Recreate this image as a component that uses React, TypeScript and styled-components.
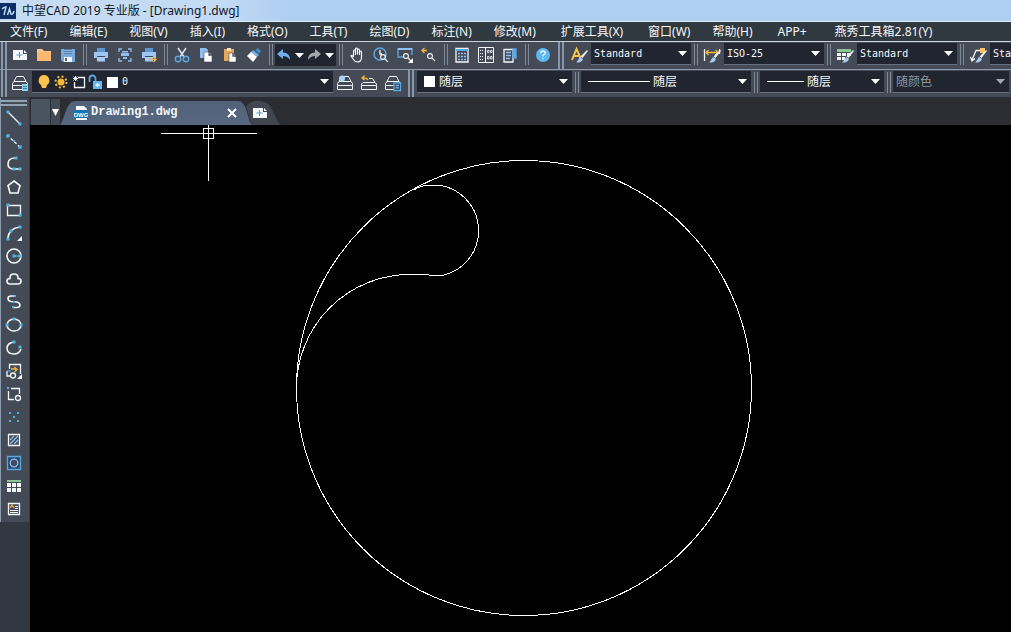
import React from "react";
import styled, { createGlobalStyle } from "styled-components";

const C = {
  bar: "#444b56",
  menu: "#303840",
  field: "#212530",
  rule: "#8d9bae",
  white: "#f4f7fa",
  blue: "#5ba7e0",
  sky: "#8fbdf0",
  cyan: "#4fb4e0",
  gold: "#f3b73e",
};

const UI = `"Noto Sans", "Noto Sans CJK SC", sans-serif`;
const MONO = `"DejaVu Sans Mono", "Noto Sans CJK SC", monospace`;

const Global = createGlobalStyle`
  *, *::before, *::after { box-sizing: border-box; }
  body { margin: 0; background: #000; font-family: ${UI}; font-size: 12px; color: ${C.white}; }
  button { font: inherit; color: inherit; background: none; border: 0; padding: 0; }
  svg { display: block; flex: none; }
`;

const Window = styled.div`
  display: flex;
  flex-direction: column;
  min-height: 100vh;
  overflow: hidden;
`;

const TitleBar = styled.header`
  display: flex;
  align-items: center;
  gap: 6px;
  height: 22px;
  border-bottom: 1px solid #e4eef8;
  background: linear-gradient(90deg, #c6dcf3, #c3daf4 220px, #aecff2 290px);
  color: #10151c;
`;

const Title = styled.h1`
  margin: 0;
  font-size: 12px;
  line-height: 20px;
  font-weight: 400;
  white-space: nowrap;
`;

const MenuBar = styled.nav`
  display: flex;
  gap: 22px;
  height: 20px;
  padding-left: 10px;
  background: ${C.menu};
  border-bottom: 1px solid #cbd3dc;
`;

const MenuItem = styled.button<{ $addon: boolean }>`
  padding: 0 ${(p) => (p.$addon ? 3 : 0)}px;
  line-height: 19px;
  white-space: nowrap;
`;

const Toolbar = styled.div<{ $ruled?: boolean }>`
  display: flex;
  align-items: stretch;
  height: ${(p) => (p.$ruled ? 28 : 27)}px;
  overflow: hidden;
  background: ${C.bar};
  border-bottom: ${(p) => (p.$ruled ? `1px solid ${C.rule}` : "0")};
  > * { flex: none; }
`;

const Grip = styled.span<{ $wide?: boolean }>`
  width: 6px;
  margin: 0 ${(p) => (p.$wide ? 3 : 1)}px;
  border: solid #8796aa;
  border-width: 0 2px;
`;

const Divider = styled.span`
  width: 4px;
  margin: 2px 2px 4px 3px;
  border: solid #7f8998;
  border-width: 0 1px;
`;

const ToolButton = styled.button<{ $narrow?: boolean }>`
  display: flex;
  align-items: center;
  justify-content: center;
  width: ${(p) => (p.$narrow ? 12 : 24)}px;
  padding-bottom: 2px;
`;

const History = styled.div`
  display: flex;
  width: 61px;
  margin: 2px 0 3px;
  background: ${C.field};
  ${ToolButton}:nth-child(odd) { width: 18px; padding: 0; }
  ${ToolButton}:nth-child(even) { padding: 0; }
`;

const Field = styled.div<{ $width: number; $muted?: boolean }>`
  display: flex;
  align-items: center;
  gap: 3px;
  width: ${(p) => p.$width}px;
  height: 22px;
  margin-top: 1px;
  padding: 0 4px 0 3px;
  background: ${C.field};
  border-bottom: 1px solid #68717f;
  color: ${(p) => (p.$muted ? "#8f959e" : C.white)};
`;

const Select = styled.select<{ $mono?: boolean }>`
  appearance: none;
  flex: 1;
  min-width: 0;
  height: 20px;
  padding: 0;
  border: 0;
  outline: 0;
  background: transparent;
  color: inherit;
  font-family: ${(p) => (p.$mono ? MONO : UI)};
  font-size: ${(p) => (p.$mono ? 10 : 12)}px;
  &:disabled { color: inherit; opacity: 1; }
`;

const Swatch = styled.span`
  width: 11px;
  height: 11px;
  margin: 0 1px 0 4px;
  background: #fff;
`;

const LineSample = styled.span<{ $length: number }>`
  width: ${(p) => p.$length}px;
  height: 1px;
  margin-left: 4px;
  background: #fff;
`;

const Workspace = styled.div`
  display: flex;
  flex: 1;
`;

const Side = styled.aside`
  width: 30px;
  background: #323842;
`;

const Palette = styled.div`
  display: flex;
  flex-direction: column;
  align-items: center;
  padding: 2px 3px 2px 0;
  border-left: 1px solid ${C.rule};
  border-right: 1px solid #323842;
  background: ${C.bar};
  margin-top: 1px;
`;

const PaletteGrip = styled.span`
  width: 26px;
  height: 6px;
  border: solid #93a2b3;
  border-width: 2px 0;
`;

const PaletteButton = styled.button`
  display: flex;
  align-items: center;
  justify-content: center;
  width: 24px;
  height: 23px;
`;

const Document = styled.main`
  display: flex;
  flex: 1;
  flex-direction: column;
  min-width: 0;
`;

const TabBar = styled.div`
  display: flex;
  align-items: flex-end;
  height: 28px;
  background: #2b2d33;
`;

const TabBlank = styled.span`
  width: 19px;
  height: 26px;
  margin-left: 1px;
  background: #48545f;
`;

const TabMenu = styled.button`
  display: flex;
  align-items: center;
  justify-content: center;
  width: 9px;
  height: 26px;
  margin-left: 1px;
  background: #424a54;
`;

const Tab = styled.div`
  display: flex;
  align-items: center;
  width: 192px;
  height: 24px;
  padding: 0 15px 0 14px;
  gap: 3px;
  background: linear-gradient(#51617a, #566880);
  clip-path: path("M0 24 C5 18 6 0 15 0 H178 C187 0 187 18 192 24 Z");
`;

const TabName = styled.span`
  flex: 1;
  padding-bottom: 2px;
  font: bold 12px/16px "Liberation Mono", monospace;
`;

const NewTab = styled.button`
  display: flex;
  align-items: center;
  width: 34px;
  height: 24px;
  margin-left: -6px;
  padding: 0 0 0 5px;
  background: #42464f;
  clip-path: path("M6 24 L0 6 C4 0 8 0 12 0 C24 0 24 6 34 24 Z");
`;

const Canvas = styled.svg`
  flex: 1;
  width: 100%;
  background: #000;
`;

type Draw = React.ReactNode;

const Glyph = ({ children, size = 18 }: { children: Draw; size?: number }) => (
  <svg width={size} height={size} viewBox={`0 0 ${size} ${size}`} fill="none" stroke={C.white} strokeWidth="1.3" aria-hidden="true">
    {children}
  </svg>
);

const Caret = ({ muted }: { muted?: boolean }) => (
  <svg width="9" height="5" viewBox="0 0 9 5" aria-hidden="true">
    <path d="M0 0H9L4.5 5Z" fill={muted ? "#a3a8b0" : "#fff"} />
  </svg>
);

const dot = (x: number, y: number, r = 1.5) => (
  <rect key={`${x}-${y}`} x={x - r} y={y - r} width={r * 2} height={r * 2} fill={C.cyan} stroke="none" />
);

const newSheet = (
  <g stroke="none">
    <path d="M2 4H12V8H16V14H2Z" fill={C.white} />
    <path d="M13 4V7H16Z" fill={C.white} />
    <path d="M8 6H9V8.5H11.5V9.5H9V12H8V9.5H5.5V8.5H8Z" fill="#4a9cc0" />
  </g>
);

const printer = (
  <g stroke="none">
    <path d="M5 2H13V6H5Z" fill="#5d97d2" />
    <path d="M2 6H16V12H13V10H5V12H2Z" fill="#9dc6f2" />
    <path d="M5 11H13V15.500H5Z" fill="#a5ccf4" />
  </g>
);

const lens = (x: number, y: number) => (
  <g strokeWidth="1.1">
    <circle cx={x} cy={y} r="2.4" />
    <path d={`M${x + 2} ${y + 2}L${x + 5} ${y + 5}`} />
  </g>
);

const stack = (
  <path d="M5.500 2.500H12.500L15 7.500H3ZM3 7.500L1.500 9.500V11.500H16.500V9.500L15 7.500M1.500 12V15.500H16.500V12" strokeWidth="1" />
);

const brush = (
  <g stroke="none">
    <path d="M17 4L18 5L12.5 12L10.5 10.5Z" fill="#e8edf2" />
    <path d="M10 11L13 13C12 16 9 17 6 16.5C8 15 8.5 12.5 10 11Z" fill="#a9c9ee" />
  </g>
);

const fileTools: [string, Draw][] = [
  ["新建", newSheet],
  ["打开", <g stroke="none"><path d="M2 3H7L9 5H16V15H2Z" fill="#ffc487" /><path d="M2 6H16V15H2Z" fill="#fbb970" /></g>],
  ["保存", <g stroke="none"><path d="M2 3H16V16H4L2 14Z" fill="#76a9e0" /><path d="M5 3H13V8H5Z" fill="#5579a3" /><path d="M5 4H13V5H5ZM5 6H13V7H5Z" fill="#8fbdf0" /><path d="M5 11H13V16H5Z" fill={C.white} /><path d="M6 12H8V15H6Z" fill="#45648a" /></g>],
];

const printTools: [string, Draw][] = [
  ["打印", printer],
  ["打印预览", <g><path d="M3 6V3H6M12 3H15V6M3 12V15H6M12 15H15V12" stroke={C.sky} /><g stroke="none" fill={C.sky}><path d="M6 5H12V6.5H6ZM5 7H13V10H5ZM7 11H11V13H7Z" /></g></g>],
  ["发布", <g>{printer}<path d="M9 13.5H16M13.5 11L16 13.5L13.5 16" stroke="#f0a54a" strokeWidth="1.5" /></g>],
];

const editTools: [string, Draw][] = [
  ["剪切", <g><path d="M5 2L11 11M13 2L7 11" stroke="#d7e1ec" strokeWidth="1.6" /><circle cx="5" cy="13" r="2.7" stroke={C.blue} strokeWidth="1.5" /><circle cx="13" cy="13" r="2.7" stroke={C.blue} strokeWidth="1.5" /></g>],
  ["复制", <g stroke="none"><path d="M3 2H9L11 4V12H3Z" fill={C.sky} /><path d="M7 6H12L15 9V16H7Z" fill="#fff" stroke={C.bar} strokeWidth="0.6" /><path d="M12 6V9H15" stroke="#444b56" /></g>],
  ["粘贴", <g stroke="none"><path d="M3 3H6V2H10V3H13V15H3Z" fill="#e5a75d" /><path d="M6 2H10V5H6Z" fill="#ffe2b8" /><path d="M8 7H12L15 10V16H8Z" fill="#fff" stroke={C.bar} strokeWidth="0.6" /><path d="M12 7V10H15" stroke="#444b56" /></g>],
  ["特性匹配", <g stroke="none"><path d="M13 2L16 5L14 8L10 4Z" fill="#4b86c4" /><path d="M8 4L14 9L12 11L6 6Z" fill="#72aee6" /><path d="M6 6L12 11L8 16L2 10Z" fill="#fff" /></g>],
];

const viewTools: [string, Draw][] = [
  ["平移", <path d="M5.5 11V5.5Q5.5 4 6.5 4Q7.5 4 7.5 5.5V9V3Q7.5 2 8.5 2Q9.5 2 9.5 3V8.5V4Q9.5 3 10.5 3Q11.5 3 11.5 4V9V6Q11.5 5 12.5 5Q13.5 5 13.5 6V11Q13.5 16 9.5 16Q7 16 5.5 13.5L3 10Q3.5 8.5 5.5 11" strokeWidth="1.2" />],
  ["实时缩放", <g><circle cx="8" cy="8" r="6" stroke={C.blue} strokeWidth="1.5" /><path d="M8 4V8H10" />{lens(11, 11)}</g>],
  ["窗口缩放", <g><path d="M7 11H2V3H16V9" stroke={C.blue} /><path d="M2 3H16" stroke={C.sky} strokeWidth="2" />{lens(10, 10)}<path d="M17 12V17H12Z" fill="#fff" stroke="none" /></g>],
  ["缩放上一个", <g><path d="M2 4.5H7M4.5 2L2 4.5L4.5 7" stroke={C.gold} />{lens(10, 10)}</g>],
];

const panelTools: [string, Draw][] = [
  ["特性", <g><path d="M3 2.5H15V16H3Z" /><path d="M3 4H15" stroke={C.blue} strokeWidth="2" /><path d="M5 7.5H13M5 10.5H13M5 13.5H13" stroke={C.sky} strokeDasharray="2 1" /></g>],
  ["设计中心", <g strokeWidth="1"><path d="M1.500 1.500H16.500V16.500H1.500ZM8.500 1.500V16.500" /><path d="M3 4.500H7M3 7.500H7M3 10.500H7M3 13.500H7" strokeDasharray="1 1" /><path d="M10.500 4.500H12V6.500H10.500ZM13.500 4.500H15V6.500H13.500ZM10.500 10.500H12V13H10.500ZM13.500 10.500H15V13H13.500Z" strokeWidth="0.800" /></g>],
  ["工具选项板", <g><path d="M3 3.5H12V16H3Z" /><path d="M12 3H15V12H12Z" fill={C.blue} stroke={C.blue} /><path d="M5 6.5H10M5 9.5H10M5 12.5H9" stroke={C.sky} /></g>],
];

const styleTools: [string, Draw, string][] = [
  ["文字样式", <g><path d="M2 14L6.5 3L10.5 12M3.5 10H9" stroke="#f4c14a" strokeWidth="2" />{brush}</g>, "Standard"],
  ["标注样式", <g><path d="M1.5 3V15M16.5 3V8" /><path d="M3 6.5H15M5.5 4L3 6.5L5.5 9M12.5 4L15 6.5L12.5 9" stroke={C.gold} />{brush}</g>, "ISO-25"],
  ["表格样式", <g stroke="none"><path d="M1 3H15V6H1Z" fill="#8cc796" /><path d="M1 7H5V10H1ZM6 7H10V10H6ZM11 7H15V10H11ZM1 11H5V14H1ZM6 11H9V14H6Z" fill={C.white} />{brush}</g>, "Standard"],
  ["多重引线样式", <g><path d="M11 4.5H7L3 14M1.5 11L3 15L6 12.5" /><path d="M11 2H16V7H11Z" fill="#ffc25d" stroke="none" />{brush}</g>, "Standard"],
];

const layerTools: [string, Draw][] = [
  ["将对象的图层置为当前", <g>{stack}<circle cx="6" cy="4.5" r="3" fill="#a9cff2" stroke="none" /></g>],
  ["上一个图层", <g><path d="M9 4.500H12.500L15 8.500H3L1.500 10V11.500H16.500V10L15 8.500M1.500 12V15.500H16.500V12" strokeWidth="1" /><path d="M8 6Q7 3.5 2 4M4.5 1.5L2 4L4.5 6" stroke={C.gold} /></g>],
  ["图层状态", <g>{stack}<path d="M10 9H16.5V16.5H10Z" fill="#26384a" stroke={C.blue} /><path d="M11.5 11.5H15M11.5 13.8H15" stroke={C.sky} /></g>],
];

const drawTools: [string, Draw][] = [
  ["直线", <g><path d="M3 3L15 15" />{dot(3, 3)}{dot(15, 15)}</g>],
  ["构造线", <g><path d="M2 3L16 16" strokeDasharray="3 2" />{dot(3, 4, 1)}{dot(9, 9, 1)}{dot(15, 15, 1)}<path d="M2 6V3H5M13 16H16V13" stroke={C.cyan} /></g>],
  ["多段线", <g><path d="M10 3Q3 3 3 9Q3 14 9 14H14" strokeWidth="1.6" />{dot(11, 3)}{dot(9, 14)}{dot(15, 14)}</g>],
  ["正多边形", <path d="M9 3L15 7.5L13 15H5L3 7.5Z" strokeWidth="1.6" />],
  ["矩形", <g><path d="M2.5 4.5H15.5V14.5H2.5Z" />{dot(3, 4)}{dot(15, 14)}</g>],
  ["圆弧", <g><path d="M2.5 15Q4 4 15 3" strokeWidth="1.6" />{dot(3, 15)}{dot(6, 7)}{dot(15, 3)}<path d="M17 12V17H12Z" fill="#fff" stroke="none" /></g>],
  ["圆", <g><circle cx="9" cy="9" r="7" strokeWidth="1.6" /><path d="M9 9H14" stroke={C.cyan} />{dot(9, 9)}{dot(15, 9)}</g>],
  ["修订云线", <path d="M5 14Q2 14 2 11Q2 8.5 5 8.5Q4.500 4 9 4Q13.500 4 13 8.500Q16 8.500 16 11Q16 14 13 14Z" strokeWidth="1.6" />],
  ["样条曲线", <g><path d="M10 3H6Q3 3 3 5.500Q3 8 6 8.500L12 9Q15 10 15 12Q15 14.500 12 14.500H8" strokeWidth="1.600" />{dot(10, 3, 1)}{dot(9, 9, 1)}{dot(8, 14, 1)}</g>],
  ["椭圆", <g><ellipse cx="9" cy="9" rx="7" ry="6" strokeWidth="1.6" />{dot(2, 9)}{dot(16, 9)}{dot(9, 3)}</g>],
  ["椭圆弧", <g><path d="M9 3Q2 4 2 9.500Q2.500 15 9 15Q14 15 16 10" strokeWidth="1.600" />{dot(9, 3)}{dot(15, 8)}</g>],
  ["插入块", <g><path d="M4.500 7V2.500H15.500V12M2 9V14H5" /><path d="M2 9H6" stroke={C.blue} /><path d="M6 7H12M9.500 5L12 7.500L9.500 10" stroke={C.gold} /><circle cx="8" cy="13.500" r="2.500" /><path d="M17 12V17H12Z" fill="#fff" stroke="none" /></g>],
  ["创建块", <g><path d="M6 3.500H14.500V9M3.500 6V14.500H9" />{dot(3, 3, 1)}<circle cx="13" cy="13" r="2.500" /></g>],
  ["点", <g>{[[5, 5], [13, 5], [9, 9], [5, 13], [13, 13]].map(([x, y]) => dot(x, y, 1))}</g>],
  ["图案填充", <g><path d="M3.500 3.500H14.500V14.500H3.500Z" /><path d="M5 9L9 5M5 13L13 5M9 13L13 9" stroke={C.sky} /></g>],
  ["面域", <g><path d="M2.500 2.500H15.500V15.500H2.500Z" fill="#27496e" stroke={C.blue} /><circle cx="9" cy="9" r="3.800" fill={C.bar} stroke={C.sky} /></g>],
  ["表格", <g stroke="none"><path d="M2 3H16V5H2Z" fill="#8cc796" /><path d="M2 6H6V10H2ZM7 6H11V10H7ZM12 6H16V10H12ZM2 11H6V15H2ZM7 11H11V15H7ZM12 11H16V15H12Z" fill={C.white} /></g>],
  ["多行文字", <g><path d="M3.500 3.500H14.500V14.500H3.500Z" /><path d="M10 6.500H13M10 8.500H13M5 10.500H13M5 12.500H13" strokeWidth="1" /><path d="M5 8L7 5L9 8" stroke={C.gold} /></g>],
];

const menus = [
  "文件(F)", "编辑(E)", "视图(V)", "插入(I)", "格式(O)", "工具(T)", "绘图(D)", "标注(N)",
  "修改(M)", "扩展工具(X)", "窗口(W)", "帮助(H)", "APP+", "燕秀工具箱2.81(Y)",
];
const addons = ["扩展工具(X)", "APP+", "燕秀工具箱2.81(Y)"];

const Tools = ({ items }: { items: [string, Draw][] }) => (
  <>
    {items.map(([name, art]) => (
      <ToolButton key={name} aria-label={name}><Glyph>{art}</Glyph></ToolButton>
    ))}
  </>
);

type ComboProps = { label: string; value: string; width: number; mono?: boolean; muted?: boolean; children?: Draw };

const Combo = ({ label, value, width, mono, muted, children }: ComboProps) => (
  <Field $width={width} $muted={muted}>
    {children}
    <Select aria-label={label} $mono={mono} disabled={muted}>
      <option>{value}</option>
    </Select>
    <Caret muted={muted} />
  </Field>
);

const LayerState = () => (
  <svg width="84" height="18" viewBox="0 0 84 18" fill="none" stroke={C.white} strokeWidth="1.3" aria-hidden="true">
    <path d="M9 2A5.500 5.500 0 0 1 12 12L11 15H7L6 12A5.500 5.500 0 0 1 9 2Z" fill="#ffc34d" stroke="none" />
    <circle cx="26" cy="9" r="3.500" fill={C.gold} stroke="none" />
    <circle cx="26" cy="9" r="5.500" stroke={C.gold} strokeWidth="2" strokeDasharray="2 2.300" />
    <path d="M43 4.500H49.500V14.500H39.500V9" />
    <path d="M38 5.500H43M40.500 3V8M38.500 3.500L42.500 7.500M42.500 3.500L38.500 7.500" strokeWidth="0.9" />
    <path d="M54.500 9V5.500A3 3 0 0 1 60.500 5.500V8" stroke={C.blue} strokeWidth="1.800" />
    <path d="M58 8H67V16H58Z" fill="#68b6f4" stroke="none" />
    <path d="M62.500 10V14M60.500 12H64.500" />
    <path d="M72 4H83V15H72Z" fill="#fff" stroke="none" />
  </svg>
);

export default function App() {
  return (
    <Window>
      <Global />
      <TitleBar>
        <svg width="16" height="16" viewBox="0 0 16 16" aria-hidden="true">
          <rect width="16" height="16" fill="#0d2e63" />
          <path d="M2 6Q4 4 6 4L4 12M7.500 12L9.500 6L11 11Q13 12 14 8" fill="none" stroke="#b9d6f5" strokeWidth="1.500" />
        </svg>
        <Title>中望CAD 2019 专业版 - [Drawing1.dwg]</Title>
      </TitleBar>
      <MenuBar>
        {menus.map((m) => <MenuItem key={m} $addon={addons.includes(m)}>{m}</MenuItem>)}
      </MenuBar>

      <Toolbar $ruled>
        <Grip />
        <Tools items={fileTools} />
        <Divider />
        <Tools items={printTools} />
        <Divider />
        <Tools items={editTools} />
        <Divider />
        <History>
          <ToolButton aria-label="放弃">
            <Glyph><path d="M2 8L8 3V6.500Q15 6.500 15 14Q12.500 10 8 10V13Z" fill="#72aef0" stroke="none" /></Glyph>
          </ToolButton>
          <ToolButton $narrow aria-label="放弃列表"><Caret /></ToolButton>
          <ToolButton aria-label="重做">
            <Glyph><path d="M16 8L10 3V6.500Q3 6.500 3 14Q5.500 10 10 10V13Z" fill="#a3a8ae" stroke="none" /></Glyph>
          </ToolButton>
          <ToolButton $narrow aria-label="重做列表"><Caret /></ToolButton>
        </History>
        <Divider />
        <Tools items={viewTools} />
        <Divider />
        <Tools items={panelTools} />
        <Divider />
        <ToolButton aria-label="帮助">
          <Glyph>
            <circle cx="9" cy="9" r="7" fill="#5db8f2" stroke="none" />
            <path d="M6.800 7.200Q6.800 5 9 5Q11.200 5 11.200 7Q11.200 8.300 9 9.300V10.500M9 12V13.300" />
          </Glyph>
        </ToolButton>
        <Grip $wide />
        {styleTools.map(([name, art, value], i) => (
          <React.Fragment key={name}>
            {i > 0 && <Divider />}
            <ToolButton aria-label={name}><Glyph>{art}</Glyph></ToolButton>
            <Combo label={`当前${name}`} value={value} width={100} mono />
          </React.Fragment>
        ))}
      </Toolbar>

      <Toolbar>
        <Grip />
        <ToolButton aria-label="图层特性管理器">
          <Glyph>{stack}<path d="M11 10H17V17H11Z" fill="#8fd0ee" stroke="none" /><path d="M12 12.500H16M12 14.500H16" stroke="#3f7ea8" strokeWidth="1" /></Glyph>
        </ToolButton>
        <Combo label="图层" value="0" width={301} mono><LayerState /></Combo>
        <Tools items={layerTools} />
        <Grip $wide />
        <Combo label="颜色" value="随层" width={155}><Swatch /></Combo>
        <Divider />
        <Combo label="线型" value="随层" width={170}><LineSample $length={62} /></Combo>
        <Divider />
        <Combo label="线宽" value="随层" width={124}><LineSample $length={37} /></Combo>
        <Divider />
        <Combo label="打印样式" value="随颜色" width={116} muted />
      </Toolbar>

      <Workspace>
        <Side>
          <Palette>
            <PaletteGrip />
            {drawTools.map(([name, art]) => (
              <PaletteButton key={name} aria-label={name}><Glyph>{art}</Glyph></PaletteButton>
            ))}
          </Palette>
        </Side>
        <Document>
          <TabBar>
            <TabBlank />
            <TabMenu aria-label="图纸列表">
              <svg width="7" height="7" viewBox="0 0 7 7" aria-hidden="true"><path d="M0 0H7L3.500 7Z" fill="#fff" /></svg>
            </TabMenu>
            <Tab>
              <svg width="14" height="16" viewBox="0 0 14 16" aria-hidden="true">
                <path d="M2 1H10L13 4V15H2Z" fill="#f4f8fc" />
                <rect y="5" width="14" height="8" fill="#1773b8" />
                <text x="7" y="12" fontSize="6" fontWeight="700" fontFamily="Liberation Sans, sans-serif" textAnchor="middle" fill="#fff">DWG</text>
              </svg>
              <TabName>Drawing1.dwg</TabName>
              <button aria-label="关闭">
                <svg width="10" height="16" viewBox="0 0 10 16"><path d="M1 4L9 12M9 4L1 12" stroke="#fff" strokeWidth="2" /></svg>
              </button>
            </Tab>
            <NewTab aria-label="新建图纸"><Glyph>{newSheet}</Glyph></NewTab>
          </TabBar>
          <Canvas fill="none" stroke="#fff" strokeWidth="1" shapeRendering="crispEdges" role="img" aria-label="模型空间">
            <circle cx="494" cy="263" r="227.500" />
            <path d="M384 65Q390 60 403 60A45.500 45.500 0 0 1 448.500 105.500A45.500 45.500 0 0 1 412 150.500H404L394 149.500H380A113.500 113.500 0 0 0 266.500 263" />
            <path d="M131 8.500H227M178.500 0V56M173.500 3.500H183.500V13.500H173.500Z" />
          </Canvas>
        </Document>
      </Workspace>
    </Window>
  );
}
